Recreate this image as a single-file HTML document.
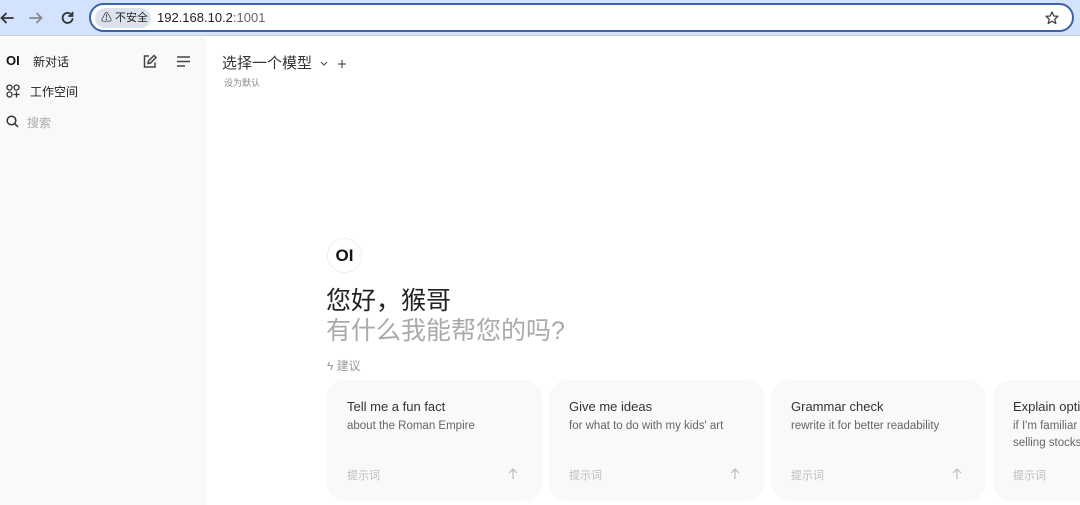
<!DOCTYPE html>
<html><head><meta charset="utf-8"><style>
*{box-sizing:border-box;margin:0;padding:0}
body{width:1080px;height:505px;overflow:hidden;background:#fff;font-family:"Liberation Sans","Noto Sans CJK SC",sans-serif;position:relative}
.top{position:absolute;left:0;top:0;width:1080px;height:36px;background:#d3e3fd;border-bottom:1px solid #c5cfe0}
.addr{position:absolute;left:89px;top:3px;width:985px;height:29px;background:#fff;border:2px solid #3d62a8;border-radius:15px}
.chip{position:absolute;left:4px;top:3px;height:20px;width:56px;background:#dde3ee;border-radius:10px;font-size:11px;color:#222;line-height:20px;padding-left:6px}
.url{position:absolute;left:66px;top:5px;font-size:13px;color:#1f1f1f}
.side{position:absolute;left:0;top:37px;width:206px;height:468px;background:#f9f9f9}
.t{position:absolute;white-space:nowrap}
.card{position:absolute;top:380px;width:215px;height:121px;background:#f9f9f9;border-radius:18px;overflow:hidden}
.card .a{position:absolute;left:20px;top:19px;font-size:13px;color:#333;white-space:nowrap}
.card .b{position:absolute;left:20px;top:38px;font-size:11.5px;color:#666;line-height:17px;white-space:nowrap}
.card .c{position:absolute;left:20px;top:87px;font-size:11px;color:#bbb}
.card svg{position:absolute;right:24px;top:88px}
.clip{position:absolute;left:0;top:0;width:1080px;height:505px;overflow:hidden}
</style></head><body><div class="clip">
<div class="top">
<svg style="position:absolute;left:0;top:10px" width="80" height="16" fill="none" stroke-width="1.8" stroke-linecap="round">
<path d="M13 8H2M6 3.5L1.5 8L6 12.5" stroke="#333"/>
<path d="M30 8H41M37 3.5L41.5 8L37 12.5" stroke="#888"/>
<path d="M72 5.5A5 5 0 1 0 72.5 9M72.5 2.5V6H69" stroke="#333"/>
</svg>
<div class="addr"><div class="chip">⚠ 不安全</div><div class="url">192.168.10.2<span style="color:#666">:1001</span></div>
<svg style="position:absolute;right:13px;top:6px" width="14" height="14" fill="none" stroke="#444" stroke-width="1.3" stroke-linejoin="round"><path d="M7 1L8.8 5L13 5.3L9.8 8.1L10.8 12.5L7 10.2L3.2 12.5L4.2 8.1L1 5.3L5.2 5Z"/></svg></div>
</div>
<div class="side">
<div class="t" style="left:6px;top:16px;font-size:13px;font-weight:bold;color:#111">OI</div>
<div class="t" style="left:33px;top:16px;font-size:12px;color:#222">新对话</div>
<svg style="position:absolute;left:142px;top:17px" width="52" height="15" fill="none" stroke="#444" stroke-width="1.5"><path d="M7 2H2.5V13H13V8.5M6 9.5L6.5 7L12 1.5L14 3.5L8.5 9Z"/><path d="M35 3H48M35 7.5H48M35 12H43"/></svg>
<svg style="position:absolute;left:6px;top:47px" width="14" height="14" fill="none" stroke="#333" stroke-width="1.3"><circle cx="3.5" cy="3.5" r="2.5"/><circle cx="10.5" cy="3.5" r="2.5"/><circle cx="3.5" cy="10.5" r="2.5"/><path d="M10.5 7.5V13.5M7.5 10.5H13.5"/></svg>
<div class="t" style="left:30px;top:46px;font-size:12px;color:#222">工作空间</div>
<svg style="position:absolute;left:6px;top:78px" width="13" height="13" fill="none" stroke="#333" stroke-width="1.5"><circle cx="5.5" cy="5.5" r="4.3"/><path d="M8.7 8.7L12 12"/></svg>
<div class="t" style="left:27px;top:77px;font-size:12px;color:#aaa">搜索</div>
</div>
<div class="t" style="left:222px;top:52px;font-size:15px;color:#333">选择一个模型</div>
<svg style="position:absolute;left:320px;top:59px" width="30" height="10" fill="none" stroke="#555" stroke-width="1.2"><path d="M1 3L4 6L7 3M22 1V9M18 5H26"/></svg>
<div class="t" style="left:224px;top:76px;font-size:9px;color:#888">设为默认</div>
<div style="position:absolute;left:327px;top:238px;width:35px;height:35px;border:1px solid #eee;border-radius:50%;font-weight:bold;font-size:17px;text-align:center;line-height:33px;color:#111">OI</div>
<div class="t" style="left:326px;top:281px;font-size:25px;color:#222">您好，猴哥</div>
<div class="t" style="left:326px;top:311px;font-size:25px;color:#aaa">有什么我能帮您的吗?</div>
<div class="t" style="left:327px;top:357px;font-size:12px;color:#999">ϟ 建议</div>
<div class="card" style="left:327px"><div class="a">Tell me a fun fact</div><div class="b">about the Roman Empire</div><div class="c">提示词</div><svg width="10" height="12" fill="none" stroke="#bbb" stroke-width="1.2"><path d="M5 11V1M1 5L5 1L9 5"/></svg></div>
<div class="card" style="left:549px"><div class="a">Give me ideas</div><div class="b">for what to do with my kids' art</div><div class="c">提示词</div><svg width="10" height="12" fill="none" stroke="#bbb" stroke-width="1.2"><path d="M5 11V1M1 5L5 1L9 5"/></svg></div>
<div class="card" style="left:771px"><div class="a">Grammar check</div><div class="b">rewrite it for better readability</div><div class="c">提示词</div><svg width="10" height="12" fill="none" stroke="#bbb" stroke-width="1.2"><path d="M5 11V1M1 5L5 1L9 5"/></svg></div>
<div class="card" style="left:993px;width:87px;border-radius:18px 0 0 18px"><div class="a">Explain options trading</div><div class="b">if I'm familiar with buying and<br>selling stocks</div><div class="c">提示词</div></div>
</div></body></html>
